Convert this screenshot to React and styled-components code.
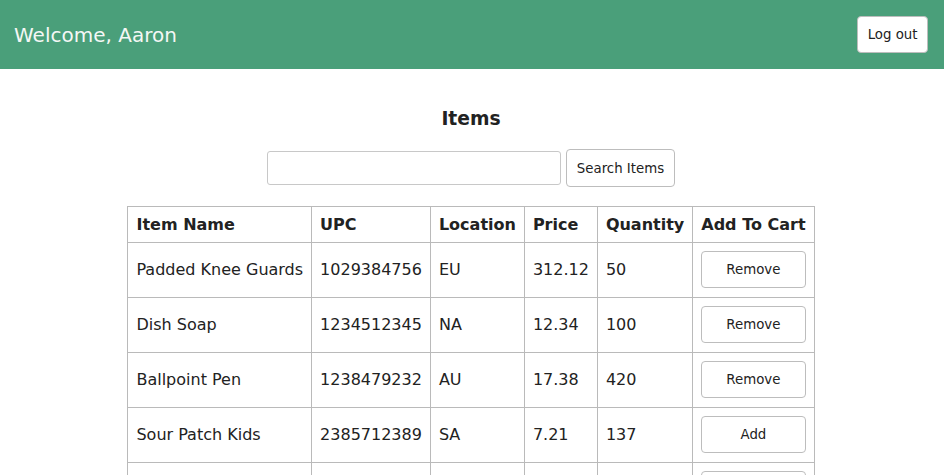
import React from "react";
import styled, { createGlobalStyle } from "styled-components";

const Global = createGlobalStyle`
  html, body { margin: 0; padding: 0; background: #fff; }
  body { font-family: "DejaVu Sans", sans-serif; color: #222; }
`;

const Header = styled.header`
  height: 69px;
  background: #4a9f7a;
  display: flex;
  align-items: center;
  justify-content: space-between;
  padding: 0 16px 0 14px;
`;

const Welcome = styled.div`
  font-size: 20px;
  color: #f4f7f5;
`;

const Button = styled.button`
  display: block;
  font-family: "DejaVu Sans", sans-serif;
  font-size: 13.333px;
  color: #222;
  background: #fff;
  border: 1px solid #bdbdbd;
  border-radius: 4px;
  padding: 0 ${(p) => (p.$px != null ? p.$px : 10)}px;
  height: ${(p) => p.$h || 37}px;
  width: ${(p) => (p.$full ? "100%" : "auto")};
  cursor: pointer;
`;

const Main = styled.main`
  display: flex;
  flex-direction: column;
  align-items: center;
  padding: 38px 2px 0 0;
`;

const Title = styled.h3`
  margin: 0;
  font-size: 18.72px;
  font-weight: bold;
  line-height: 24px;
`;

const SearchRow = styled.div`
  display: flex;
  align-items: center;
  gap: 5px;
  margin-top: 18px;
`;

const Input = styled.input`
  width: 294px;
  height: 34px;
  box-sizing: border-box;
  border: 1px solid #c8c8c8;
  border-radius: 3px;
  font-family: "DejaVu Sans", sans-serif;
  font-size: 14px;
  padding: 0 8px;
`;

const Table = styled.table`
  margin-top: 19px;
  border-collapse: collapse;
  font-size: 16px;
`;

const Th = styled.th`
  border: 1px solid #bababa;
  padding: 8px 8px;
  text-align: left;
  font-weight: bold;
  height: 19px;
  white-space: nowrap;
`;

const Td = styled.td`
  border: 1px solid #bababa;
  padding: 8px 8px 9px;
  white-space: nowrap;
  height: 37px;
  vertical-align: middle;
`;

const items = [
  ["Padded Knee Guards", "1029384756", "EU", "312.12", "50", "Remove"],
  ["Dish Soap", "1234512345", "NA", "12.34", "100", "Remove"],
  ["Ballpoint Pen", "1238479232", "AU", "17.38", "420", "Remove"],
  ["Sour Patch Kids", "2385712389", "SA", "7.21", "137", "Add"],
  ["Trail Mix", "3847562910", "NA", "4.99", "75", "Add"],
];

export default function App() {
  return (
    <>
      <Global />
      <Header>
        <Welcome>Welcome, Aaron</Welcome>
        <Button $px={9.5}>Log out</Button>
      </Header>
      <Main>
        <Title>Items</Title>
        <SearchRow>
          <Input type="text" />
          <Button $h={38}>Search Items</Button>
        </SearchRow>
        <Table>
          <thead>
            <tr>
              <Th>Item Name</Th>
              <Th>UPC</Th>
              <Th>Location</Th>
              <Th>Price</Th>
              <Th>Quantity</Th>
              <Th>Add To Cart</Th>
            </tr>
          </thead>
          <tbody>
            {items.map((it) => (
              <tr key={it[1]}>
                <Td>{it[0]}</Td>
                <Td>{it[1]}</Td>
                <Td>{it[2]}</Td>
                <Td>{it[3]}</Td>
                <Td>{it[4]}</Td>
                <Td>
                  <Button $full>{it[5]}</Button>
                </Td>
              </tr>
            ))}
          </tbody>
        </Table>
      </Main>
    </>
  );
}
